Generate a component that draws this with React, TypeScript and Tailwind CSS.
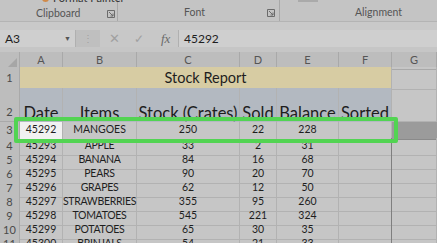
import React from 'react';

const GRID = 'grid grid-cols-[20px_43px_74px_103px_37px_62px_53px_45px]';

const ROWS: { n: number; date: string; item: string; stock: string; sold: string; bal: string }[] = [
  { n: 4, date: '45293', item: 'APPLE', stock: '33', sold: '2', bal: '31' },
  { n: 5, date: '45294', item: 'BANANA', stock: '84', sold: '16', bal: '68' },
  { n: 6, date: '45295', item: 'PEARS', stock: '90', sold: '20', bal: '70' },
  { n: 7, date: '45296', item: 'GRAPES', stock: '62', sold: '12', bal: '50' },
  { n: 8, date: '45297', item: 'STRAWBERRIES', stock: '355', sold: '95', bal: '260' },
  { n: 9, date: '45298', item: 'TOMATOES', stock: '545', sold: '221', bal: '324' },
  { n: 10, date: '45299', item: 'POTATOES', stock: '65', sold: '30', bal: '35' },
  { n: 11, date: '45300', item: 'BRINJALS', stock: '54', sold: '21', bal: '33' },
];

function Launcher() {
  return (
    <svg width="8" height="8" viewBox="0 0 8 8" className="shrink-0">
      <path d="M0.5 0.5h7v7h-7z" fill="none" stroke="#6b6b6b" strokeWidth="1" />
      <path d="M2 2l4 4M6 3.5V6H3.5" fill="none" stroke="#6b6b6b" strokeWidth="1" />
    </svg>
  );
}

function Cell({ children, className = '' }: { children?: React.ReactNode; className?: string }) {
  return (
    <div className={`flex items-center justify-center border-r border-b border-[#b2b2b2] whitespace-nowrap ${className}`}>
      {children}
    </div>
  );
}

function HeadRow({ n, className = '' }: { n: number; className?: string }) {
  return (
    <div className={`flex items-center justify-center border-r border-b border-[#a9a9a9] bg-[#bdbdbd] text-[#4a4a4a] text-[11px] ${className}`}>
      {n}
    </div>
  );
}

export default function App() {
  return (
    <div className="w-[437px] h-[243px] overflow-hidden bg-[#c6c6c6] text-[#1e1e1e] font-['Lato',sans-serif] select-none">
      {/* Ribbon group labels */}
      <div className="flex h-[22px] bg-[#c4c4c4] border-b border-[#b4b4b4] overflow-hidden text-[10.5px] text-[#555]">
        <div className="w-[118px] h-full flex flex-col border-r border-[#a8a8a8]">
          <div className="h-[6px] flex items-start pl-[42px] text-[11px] text-[#333] whitespace-nowrap">
            <span className="-mt-[10px] flex items-center gap-1">
              <span className="w-[7px] h-[7px] rounded-full bg-[#d08a4a]" />
              <span>Format Painter</span>
            </span>
          </div>
          <div className="flex-1 flex items-center pl-[36px] pr-[2px]">
            <span>Clipboard</span>
            <span className="ml-auto"><Launcher /></span>
          </div>
        </div>
        <div className="w-[162px] h-full flex flex-col border-r border-[#a8a8a8]">
          <div className="h-[6px]" />
          <div className="flex-1 flex items-center pl-[66px] pr-[4px]">
            <span>Font</span>
            <span className="ml-auto"><Launcher /></span>
          </div>
        </div>
        <div className="flex-1 h-full flex flex-col">
          <div className="h-[6px] flex pl-[18px]">
            <span className="w-[20px] h-[2px] bg-[#d2d2d2] border border-[#aaa]" />
          </div>
          <div className="flex-1 flex items-center pl-[75px]">
            <span>Alignment</span>
          </div>
        </div>
      </div>

      {/* Formula bar */}
      <div className="h-[8px] bg-[#c9c9c9]" />
      <div className="flex h-[17px] bg-[#bfbfbf] text-[12px]">
        <div className="w-[76px] flex items-center bg-[#cfcfcf] pl-[5px] pr-[4px] border-r border-[#b0b0b0]">
          <span>A3</span>
          <span className="ml-auto text-[7px] text-[#555]">▼</span>
        </div>
        <div className="w-[24px] flex items-center justify-center text-[#a2a2a2] text-[10px]">⋮</div>
        <div className="w-[79px] flex items-center bg-[#c8c8c8] border-r border-[#b0b0b0] text-[#a0a0a0]">
          <span className="ml-[9px] text-[13px] leading-none">✕</span>
          <span className="ml-[14px] text-[12px] leading-none">✓</span>
          <span className="ml-[17px] text-[13px] italic font-['Liberation_Serif',serif] text-[#6a6a6a]">fx</span>
        </div>
        <div className="flex-1 flex items-center bg-[#cfcfcf] pl-[5px]">45292</div>
      </div>
      <div className="h-[5px] bg-[#c6c6c6]" />

      {/* Sheet */}
      <div className="relative">
        {/* Column headers */}
        <div className={`${GRID} h-[15px] bg-[#bdbdbd] text-[11px] text-[#555]`}>
          <div className="border-r border-b border-[#a9a9a9] flex items-end justify-end pr-[2px] pb-[2px]">
            <svg width="9" height="9" viewBox="0 0 9 9"><path d="M9 0V9H0Z" fill="#a6a6a6" /></svg>
          </div>
          {['A', 'B', 'C', 'D', 'E', 'F', 'G'].map((c) => (
            <div key={c} className="flex items-center justify-center border-r border-b border-[#a9a9a9]">{c}</div>
          ))}
        </div>

        {/* Row 1 */}
        <div className={`${GRID} h-[21px]`}>
          <HeadRow n={1} />
          <div className="col-span-6 flex items-center justify-center bg-[#d7cca3] border-r border-b border-[#b2b2b2] text-[14.5px]">
            Stock Report
          </div>
          <Cell />
        </div>

        {/* Row 2 */}
        <div className={`${GRID} h-[34px]`}>
          <div className="flex items-end justify-center pb-[1px] border-r border-b border-[#a9a9a9] bg-[#bdbdbd] text-[#4a4a4a] text-[11px]">2</div>
          {['Date', 'Items', 'Stock (Crates)', 'Sold', 'Balance', 'Sorted'].map((h) => (
            <div key={h} className="relative bg-[#b3b9c1] border-r border-[#b2b2b2] overflow-visible">
              <span className="absolute left-1/2 -translate-x-1/2 top-[17px] whitespace-nowrap text-[16.5px] leading-none">{h}</span>
            </div>
          ))}
          <Cell />
        </div>

        {/* Row 3 */}
        <div className={`${GRID} h-[16px] text-[10.5px]`}>
          <HeadRow n={3} />
          <Cell className="bg-[#f1f1f1]">45292</Cell>
          <Cell>MANGOES</Cell>
          <Cell>250</Cell>
          <Cell>22</Cell>
          <Cell>228</Cell>
          <Cell />
          <div className="bg-[#9b9b9b] border-b border-[#8a8a8a]" />
        </div>

        {ROWS.map((r) => (
          <div key={r.n} className={`${GRID} h-[14px] text-[10.5px]`}>
            <HeadRow n={r.n} />
            <Cell>{r.date}</Cell>
            <Cell className="tracking-[-0.3px]">{r.item}</Cell>
            <Cell>{r.stock}</Cell>
            <Cell>{r.sold}</Cell>
            <Cell>{r.bal}</Cell>
            <Cell className="border-r-[#7f7f7f]" />
            <Cell />
          </div>
        ))}

        {/* Selection highlight */}
        <div className="absolute left-[14px] top-[65px] w-[384px] h-[26px] border-[4px] border-[#52d452] rounded-[2px]" />
      </div>
    </div>
  );
}
